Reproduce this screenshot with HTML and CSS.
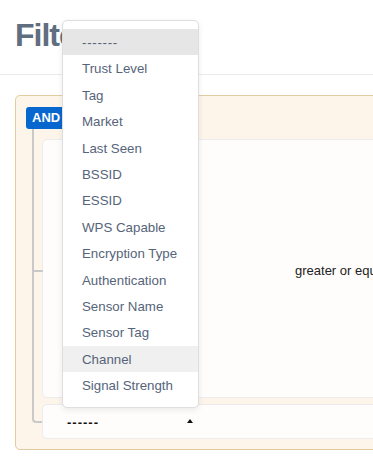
FILE: index.html
```html
<!DOCTYPE html>
<html lang="en">

<head>
    <meta charset="UTF-8">
    <meta name="viewport" content="width=device-width, initial-scale=1.0">
    <title>Filters</title>
    <link rel="stylesheet" href="styles.css">
</head>

<body>

    <div class="page">
        <div class="page-header">
            <h1>Filters</h1>
        </div>

        <div class="filter-area">
            <div class="group-box">
                <span class="group-badge">AND</span>
                <div class="rules">
                    <div class="rule rule-main">
                        <div class="rule-field"></div>
                        <div class="rule-operator">greater or equal to</div>
                    </div>
                    <div class="rule rule-new">
                        <div class="select-box">
                            <span>------</span>
                            <span class="caret"></span>
                        </div>
                    </div>
                </div>
            </div>
        </div>
    </div>

    <ul class="field-menu">
        <li class="selected">-------</li>
        <li>Trust Level</li>
        <li>Tag</li>
        <li>Market</li>
        <li>Last Seen</li>
        <li>BSSID</li>
        <li>ESSID</li>
        <li>WPS Capable</li>
        <li>Encryption Type</li>
        <li>Authentication</li>
        <li>Sensor Name</li>
        <li>Sensor Tag</li>
        <li class="hover">Channel</li>
        <li>Signal Strength</li>
    </ul>

</body>

</html>
```

FILE: styles.css
```css
* {
    padding: 0;
    margin: 0;
    box-sizing: border-box;
}

body {
    font-family: 'Liberation Sans', Arial, sans-serif;
    background-color: #fff;
    color: #333;
    overflow: hidden;
}

.page {
    width: 640px;
}

.page-header {
    padding: 16px 15px 20px;
    border-bottom: 1px solid #ebebeb;
}

h1 {
    font-size: 32px;
    line-height: 38px;
    font-weight: 700;
    color: #5f6e80;
    letter-spacing: -1px;
}

.filter-area {
    padding: 20px 0 0 15px;
}

.group-box {
    background-color: #fdf5e9;
    border: 1px solid #e2cb9e;
    border-radius: 5px;
    padding: 11px 0 10px 10px;
}

.group-badge {
    display: inline-block;
    height: 22px;
    line-height: 22px;
    padding: 0 6px;
    background-color: #0867cf;
    color: #fff;
    font-size: 13px;
    font-weight: 700;
    border-radius: 3px 3px 0 3px;
    vertical-align: top;
}

.rules {
    position: relative;
    margin-left: 6px;
    padding: 10px 0 0 10px;
    display: flex;
    flex-direction: column;
    gap: 6px;
}

.rules::before {
    content: "";
    position: absolute;
    left: 0;
    top: 0;
    bottom: 16px;
    width: 10px;
    border-left: 2px solid #c9c9c9;
    border-bottom: 2px solid #c9c9c9;
    border-bottom-left-radius: 4px;
}

.rule {
    position: relative;
    background-color: #fffdfb;
    border: 1px solid #ececec;
    border-radius: 5px;
}

.rule-main {
    height: 259px;
    display: flex;
    align-items: center;
}

.rule-main::before {
    content: "";
    position: absolute;
    left: -9px;
    top: 130px;
    width: 9px;
    height: 2px;
    background-color: #c9c9c9;
}

.rule-field {
    width: 252px;
}

.rule-operator {
    font-size: 13px;
    color: #222;
    padding-top: 3px;
}

.rule-new {
    height: 35px;
    display: flex;
    align-items: center;
}

.select-box {
    display: flex;
    justify-content: space-between;
    align-items: center;
    width: 150px;
    padding: 2px 0 0 24px;
    font-size: 13px;
    font-weight: 700;
    color: #111;
    letter-spacing: 1px;
}

.caret {
    width: 0;
    height: 0;
    border-left: 3px solid transparent;
    border-right: 3px solid transparent;
    border-bottom: 4px solid #111;
    margin-bottom: 4px;
}

.field-menu {
    list-style: none;
    position: absolute;
    top: 20px;
    left: 62px;
    width: 137px;
    padding: 8px 0 9px;
    background-color: #fff;
    border: 1px solid #dedede;
    border-radius: 5px;
    box-shadow: 0 2px 6px rgba(0, 0, 0, 0.08);
}

.field-menu li {
    height: 26.4px;
    line-height: 28px;
    padding-left: 19px;
    font-size: 13.3px;
    color: #56647a;
    white-space: nowrap;
}

.field-menu .selected {
    background-color: #e6e6e6;
    letter-spacing: 0.7px;
}

.field-menu .hover {
    background-color: #f0f0f0;
}
```
